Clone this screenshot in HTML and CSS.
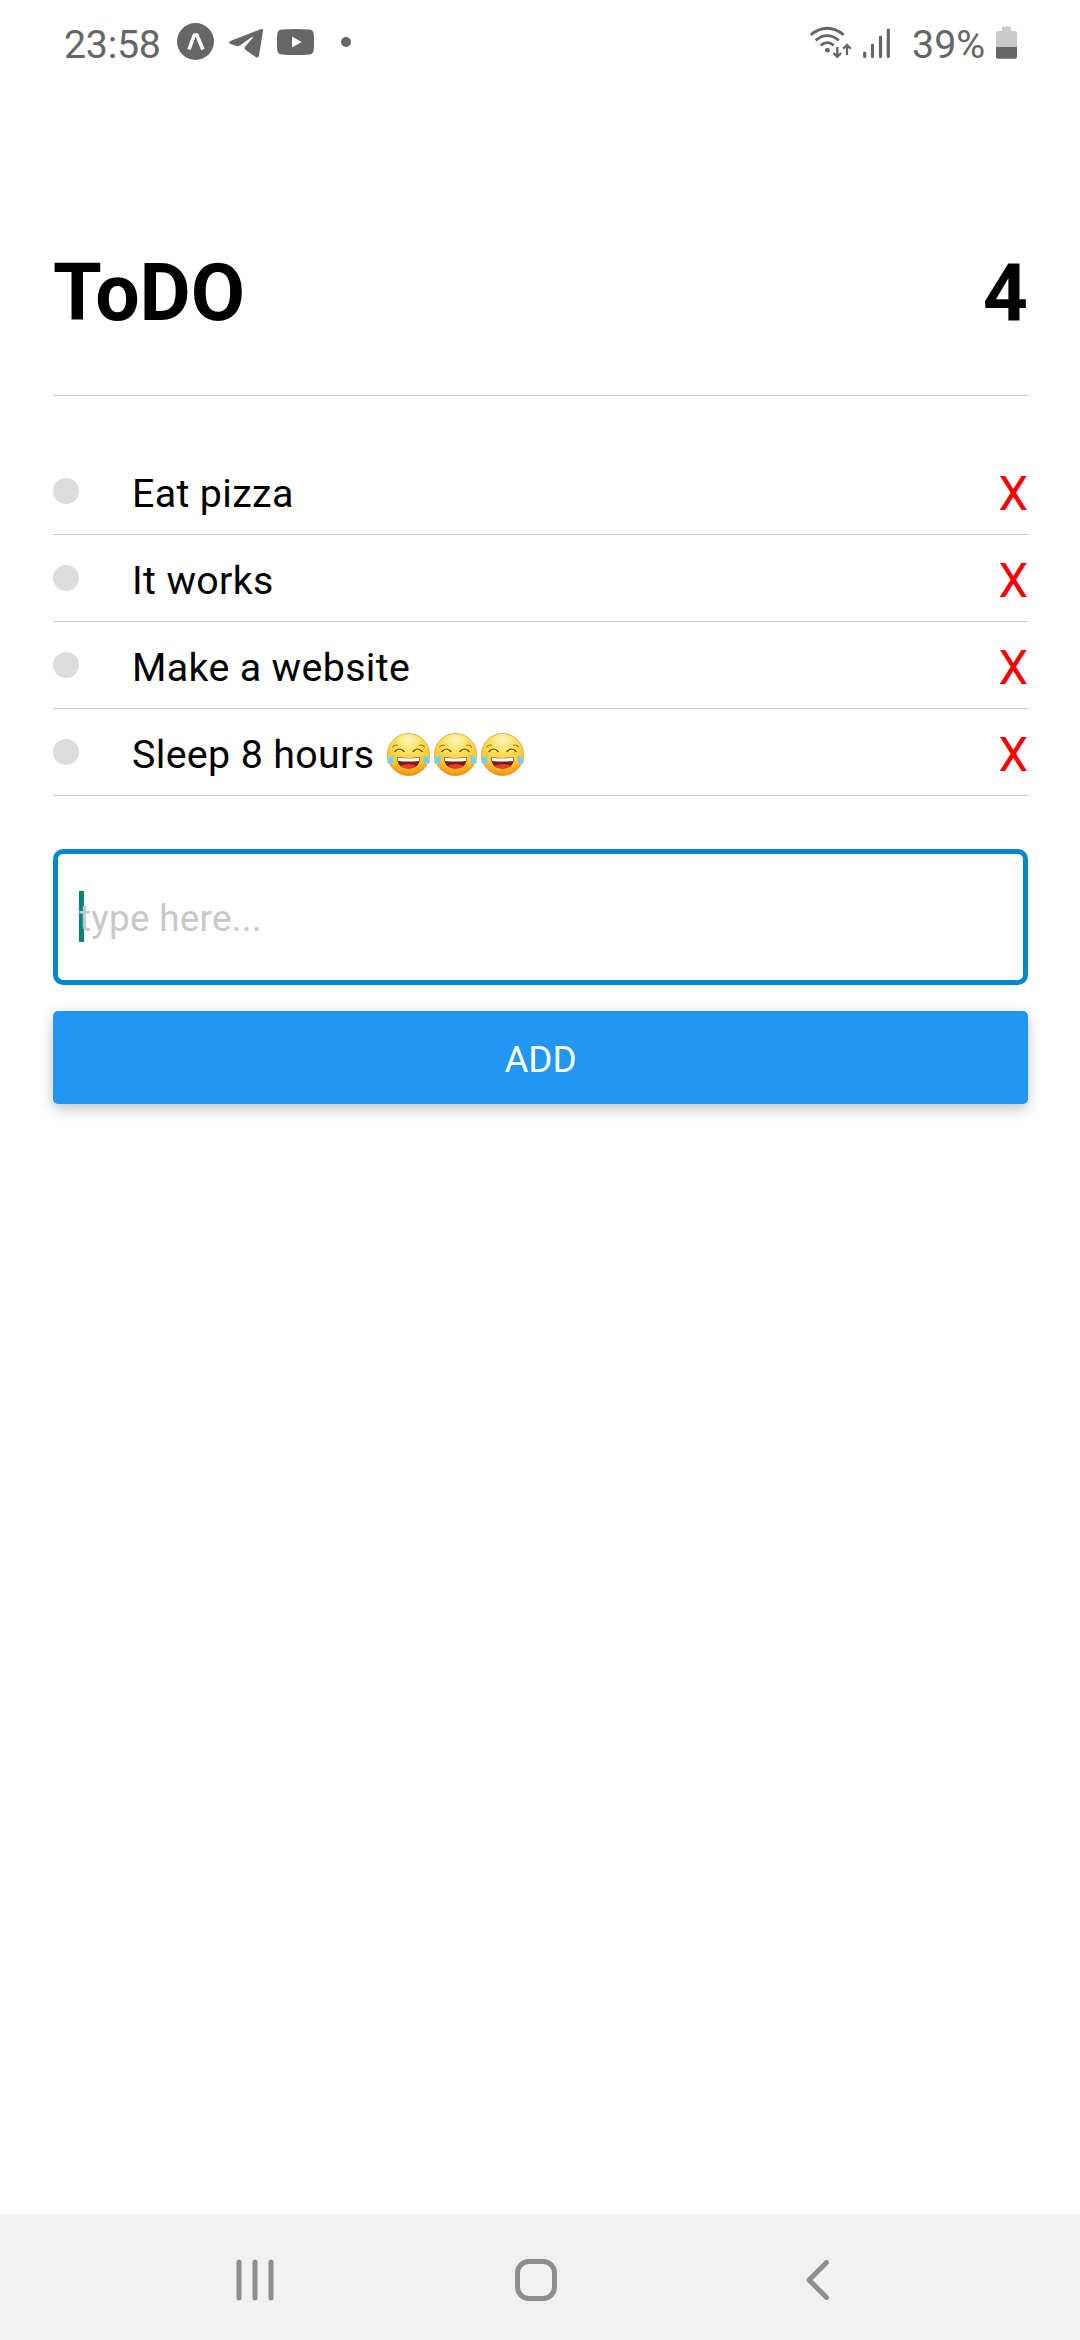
FILE: index.html
```
<!DOCTYPE html>
<html lang="en">
<head>
<meta charset="utf-8">
<title>ToDO</title>
<link rel="stylesheet" href="styles.css">
</head>
<body>
<svg class="defs" width="0" height="0" aria-hidden="true">
  <defs>
    <radialGradient id="face" cx="50%" cy="16%" r="86%">
      <stop offset="0" stop-color="#fff5be"/>
      <stop offset=".35" stop-color="#ffe05c"/>
      <stop offset=".72" stop-color="#ffc82c"/>
      <stop offset="1" stop-color="#f2860a"/>
    </radialGradient>
    <symbol id="joy" viewBox="0 0 47 47">
      <circle cx="23.5" cy="23.5" r="21" fill="url(#face)" stroke="#d99530" stroke-width=".8"/>
      <g fill="none" stroke="#5d3e08" stroke-width="1.2" stroke-linecap="round">
        <path d="M10 20.500q4.500-5 9 0M28 20.500q4.500-5 9 0"/>
        <path d="M7.500 15.800q2.500-2.500 5-1.500M34.500 14.300q3-1 5 1.500" stroke="#a87414"/>
      </g>
      <path d="M12 26q11.500 1.800 23 0q0 11.500-11.500 11.500t-11.500-11.500z" fill="#7d1a0c"/>
      <path d="M15.500 34.500q8-3 16 0q-3 3.200-8 3.200t-8-3.200z" fill="#e83a36"/>
      <path d="M12.500 26.500q11 1.700 22 0l-.5 3.400q-10.500 1.400-21 0z" fill="#fff"/>
      <path d="M8.200 24q1.600 9-3 9.200q-4.400-.6-2.400-5.200q1.400-2.600 5.400-4zM38.800 24q-1.600 9 3 9.200q4.400-.6 2.400-5.200q-1.400-2.600-5.400-4z" fill="#79cdee"/>
    </symbol>
  </defs>
</svg>
<div class="screen">
  <div class="status">
    <span class="clock">23:58</span>
    <svg class="expo" width="37" height="84" viewBox="177 0 37 84"><circle cx="195.500" cy="41.500" r="18.500" fill="#666"/><path d="M189 49.500l5.300-14.500h2.600l6 14.500" fill="none" stroke="#fff" stroke-width="3.600" stroke-linejoin="round"/></svg>
    <svg class="telegram" width="34" height="84" viewBox="229 0 34 84"><path d="M229.200 42.200Q229 43.600 230.500 44L236.500 46Q238.500 46.500 240.500 45L251.500 37.300Q253.800 36.200 252.500 38L245.300 46.400Q243.700 48.500 246 50.300L256 57.300Q258.300 58.600 259 55.600L263 31Q263.300 28.300 260.500 29.200L231 40.700Q229.300 41.300 229.200 42.200z" fill="#666"/></svg>
    <svg class="youtube" width="37" height="84" viewBox="277 0 37 84"><path d="M282 29.500q13.500-1 27 0q4.400.2 4.700 4.500q.7 8 0 16q-.3 4.300-4.700 4.500q-13.500 1-27 0q-4.400-.2-4.700-4.500q-.7-8 0-16q.3-4.300 4.700-4.500z" fill="#666"/><path d="M292 36.500v11l9.700-5.500z" fill="#fff"/></svg>
    <span class="more"></span>
    <span class="fill"></span>
    <svg class="wifi" width="43" height="84" viewBox="809 0 43 84"><g fill="none" stroke="#666" stroke-width="2.800"><path d="M810.700 34.800q16.500-13 33 0"/><path d="M815.700 40.400q11.500-9.600 23 0"/><path d="M820.700 45.300q6.500-5.300 13 0"/><path d="M837.300 47v9M833.500 53l3.800 3.800l3.800-3.800M847 55v-9.500M843.200 48.700l3.800-3.800l3.800 3.800" stroke-width="2.300"/></g><circle cx="827.400" cy="50.200" r="2.400" fill="#666"/></svg>
    <svg class="signal" width="29" height="84" viewBox="862 0 29 84"><path d="M864.700 53v3.500M872.500 45v11.500M880.500 37v19.500M888.300 30v26.500" stroke="#666" stroke-width="3.200" stroke-linecap="round"/></svg>
    <span class="percent">39%</span>
    <svg class="battery" width="21" height="84" viewBox="996 0 21 84"><path d="M1002 31v-3.500q0-1 1-1h7q1 0 1 1V31h4.500q1.500 0 1.500 1.500V47h-21V32.500q0-1.500 1.500-1.500z" fill="#cacaca"/><path d="M996 47h21v10q0 1.700-1.700 1.700h-17.600q-1.700 0-1.700-1.700z" fill="#666"/></svg>
  </div>

  <main class="app">
    <header class="header"><h1>ToDO</h1><span>4</span></header>
    <ul class="list">
      <li><i class="bullet"></i><span class="label">Eat pizza</span><button class="remove">X</button></li>
      <li><i class="bullet"></i><span class="label">It works</span><button class="remove">X</button></li>
      <li><i class="bullet"></i><span class="label">Make a website</span><button class="remove">X</button></li>
      <li><i class="bullet"></i><span class="label">Sleep 8 hours</span><span class="emojis"><svg width="47" height="47" role="img"><use href="#joy"/></svg><svg width="47" height="47" role="img"><use href="#joy"/></svg><svg width="47" height="47" role="img"><use href="#joy"/></svg></span><button class="remove">X</button></li>
    </ul>
    <div class="field"><span class="caret"></span><span class="placeholder">type here...</span></div>
    <button class="add">ADD</button>
  </main>

  <nav class="navbar">
    <svg width="42" height="42" viewBox="0 0 42 42"><path d="M5 3v36M21 3v36M37 3v36" stroke="#8e8e8e" stroke-width="5" stroke-linecap="round"/></svg>
    <svg width="42" height="42" viewBox="0 0 42 42"><rect x="2.500" y="2.500" width="37" height="37" rx="11.500" fill="none" stroke="#8e8e8e" stroke-width="5"/></svg>
    <svg width="42" height="42" viewBox="0 0 42 42"><path d="M30.500 3.500L13 21l17.500 17.500" fill="none" stroke="#8e8e8e" stroke-width="5" stroke-linecap="round" stroke-linejoin="round"/></svg>
  </nav>
</div>
</body>
</html>
```
FILE: styles.css
```
* { box-sizing: border-box; }
body { margin: 0; background: #fff; font-family: Roboto, sans-serif; color: #000; }
button { font: inherit; border: 0; background: none; padding: 0; }
svg { display: block; flex: none; }
.defs { position: absolute; }
.screen { width: 1080px; height: 2340px; display: flex; flex-direction: column; overflow: hidden; }

.status { height: 84px; display: flex; align-items: center; padding: 0 63px 0 64px; color: #666; font-size: 39.4px; line-height: 84px; }
.clock { width: 113px; flex: none; padding-top: 5px; letter-spacing: -.3px; }
.telegram { margin-left: 15px; }
.youtube { margin-left: 14px; }
.more { width: 10px; height: 10px; margin-left: 27px; border-radius: 50%; background: #666; }
.fill { flex: 1; }
.signal { margin-left: 10px; }
.percent { width: 84px; flex: none; margin-left: 21px; padding-top: 5px; }

.app { flex: 1; padding: 0 52px 0 53px; display: flex; flex-direction: column; }
.header { display: flex; justify-content: space-between; padding: 163px 0 56px; border-bottom: 1px solid #c8c8c8; font-size: 78.75px; font-weight: 700; line-height: 92px; }
.header h1 { margin: 0; font-size: inherit; font-weight: inherit; }

.list { list-style: none; margin: 52px 0 53px; padding: 0; }
.list li { height: 87px; display: flex; align-items: center; padding-top: 5px; border-bottom: 1px solid #c8c8c8; }
.bullet { width: 26px; height: 26px; margin: 0 53px 5px 0; border-radius: 50%; background: #dcdcdc; }
.label { font-size: 39.375px; line-height: 46px; letter-spacing: .35px; }
.emojis { display: flex; margin: 0 0 0 11px; }
.remove { margin-left: auto; color: #f80000; font-size: 47.25px; line-height: 56px; }

.field { height: 136px; display: flex; align-items: center; padding: 2px 21px 0; border: 5px solid #0288cc; border-radius: 10px; font-size: 36.75px; line-height: 44px; color: #c8c8c8; }
.caret { width: 5px; height: 51px; margin: 0 -5px 3px 0; background: #048474; }
.placeholder { position: relative; padding-top: 2px; letter-spacing: .3px; }
.add { height: 93px; margin-top: 26px; padding-top: 4px; border-radius: 5px; background: #2196f3; color: #fff; font-size: 36.75px; line-height: 44px; box-shadow: 0 5px 14px rgba(0, 0, 0, .24); }

.navbar { height: 126px; display: flex; justify-content: center; align-items: center; gap: 239px; padding: 6px 8px 0 0; background: #f1f1f1; }
```
